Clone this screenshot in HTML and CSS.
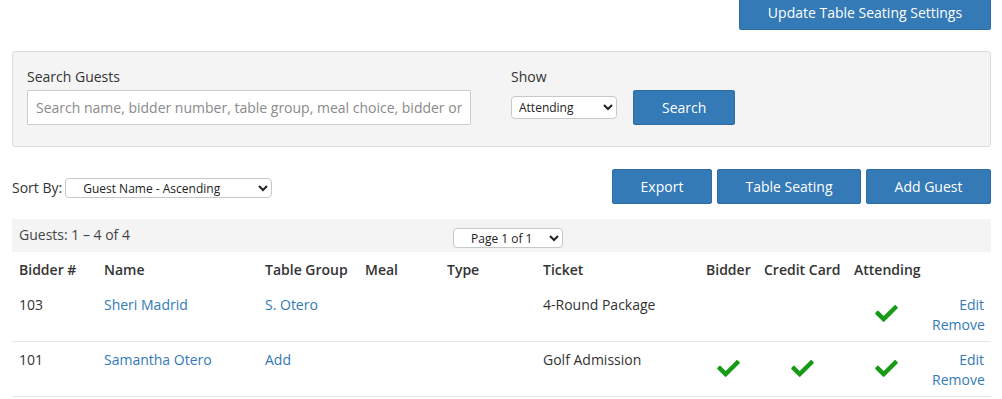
FILE: index.html
```html
<!DOCTYPE html>
<html lang="en">
<head>
  <meta charset="UTF-8">
  <title>Guests</title>
  <link rel="stylesheet" href="styles.css">
</head>
<body>
  <div class="page">
    <div class="top-bar">
      <button class="btn btn-update">Update Table Seating Settings</button>
    </div>

    <div class="search-panel">
      <div class="field">
        <label for="search">Search Guests</label>
        <input type="text" id="search" placeholder="Search name, bidder number, table group, meal choice, bidder or credit card">
      </div>
      <div class="field field-show">
        <label for="show">Show</label>
        <div class="show-row">
          <select id="show" class="select-show">
            <option>Attending</option>
          </select>
          <button class="btn">Search</button>
        </div>
      </div>
    </div>

    <div class="toolbar">
      <div class="sort">
        <label for="sort">Sort By:</label>
        <select id="sort" class="select-sort">
          <option>Guest Name - Ascending</option>
        </select>
      </div>
      <div class="actions">
        <button class="btn btn-export">Export</button>
        <button class="btn btn-seating">Table Seating</button>
        <button class="btn btn-add">Add Guest</button>
      </div>
    </div>

    <div class="summary">
      <span class="count">Guests: 1 &ndash; 4 of 4</span>
      <select class="select-page">
        <option>Page 1 of 1</option>
      </select>
    </div>

    <table class="guests">
      <colgroup>
        <col style="width: 85px">
        <col style="width: 161px">
        <col style="width: 100px">
        <col style="width: 82px">
        <col style="width: 96px">
        <col style="width: 163px">
        <col style="width: 58px">
        <col style="width: 90px">
        <col style="width: 78px">
        <col style="width: 66px">
      </colgroup>
      <thead>
        <tr>
          <th>Bidder #</th>
          <th>Name</th>
          <th>Table Group</th>
          <th>Meal</th>
          <th>Type</th>
          <th>Ticket</th>
          <th class="center">Bidder</th>
          <th class="center">Credit Card</th>
          <th class="center">Attending</th>
          <th></th>
        </tr>
      </thead>
      <tbody>
        <tr>
          <td>103</td>
          <td><a href="#">Sheri Madrid</a></td>
          <td><a href="#">S. Otero</a></td>
          <td></td>
          <td></td>
          <td>4-Round Package</td>
          <td class="check-cell"></td>
          <td class="check-cell"></td>
          <td class="check-cell"><svg class="check" viewBox="0 64 512 384"><path d="M173.9 439.4l-166.4-166.4c-10-10-10-26.2 0-36.2l36.2-36.2c10-10 26.2-10 36.2 0L192 312.7 432.1 72.6c10-10 26.2-10 36.2 0l36.2 36.2c10 10 10 26.2 0 36.2l-294.4 294.4c-10 10-26.2 10-36.2 0z"/></svg></td>
          <td class="links"><a href="#">Edit</a><a href="#">Remove</a></td>
        </tr>
        <tr>
          <td>101</td>
          <td><a href="#">Samantha Otero</a></td>
          <td><a href="#">Add</a></td>
          <td></td>
          <td></td>
          <td>Golf Admission</td>
          <td class="check-cell"><svg class="check" viewBox="0 64 512 384"><path d="M173.9 439.4l-166.4-166.4c-10-10-10-26.2 0-36.2l36.2-36.2c10-10 26.2-10 36.2 0L192 312.7 432.1 72.6c10-10 26.2-10 36.2 0l36.2 36.2c10 10 10 26.2 0 36.2l-294.4 294.4c-10 10-26.2 10-36.2 0z"/></svg></td>
          <td class="check-cell"><svg class="check" viewBox="0 64 512 384"><path d="M173.9 439.4l-166.4-166.4c-10-10-10-26.2 0-36.2l36.2-36.2c10-10 26.2-10 36.2 0L192 312.7 432.1 72.6c10-10 26.2-10 36.2 0l36.2 36.2c10 10 10 26.2 0 36.2l-294.4 294.4c-10 10-26.2 10-36.2 0z"/></svg></td>
          <td class="check-cell"><svg class="check" viewBox="0 64 512 384"><path d="M173.9 439.4l-166.4-166.4c-10-10-10-26.2 0-36.2l36.2-36.2c10-10 26.2-10 36.2 0L192 312.7 432.1 72.6c10-10 26.2-10 36.2 0l36.2 36.2c10 10 10 26.2 0 36.2l-294.4 294.4c-10 10-26.2 10-36.2 0z"/></svg></td>
          <td class="links"><a href="#">Edit</a><a href="#">Remove</a></td>
        </tr>
      </tbody>
    </table>
  </div>
</body>
</html>
```

FILE: styles.css
```css
body {
  margin: 0;
  font-family: "Open Sans", "Liberation Sans", sans-serif;
  font-size: 14px;
  line-height: 20px;
  color: #333;
  background-color: #fff;
  overflow: hidden;
}

.page {
  padding: 0 11px 0 12px;
}

a {
  color: #337ab7;
  text-decoration: none;
}

.btn {
  height: 35px;
  padding: 0 28px;
  font-family: inherit;
  font-size: 14px;
  color: #fff;
  background-color: #337ab7;
  border: 1px solid #2e6da4;
  border-radius: 2px;
  cursor: pointer;
}

.top-bar {
  display: flex;
  justify-content: flex-end;
}

.btn-update {
  margin-top: -5px;
  width: 252px;
  padding: 0;
}

.search-panel {
  display: flex;
  gap: 40px;
  margin-top: 21px;
  padding: 15px 14px 21px;
  background-color: #f4f4f4;
  border: 1px solid #dcdcdc;
  border-radius: 3px;
}

.field {
  display: flex;
  flex-direction: column;
  gap: 3px;
}

.field input {
  box-sizing: border-box;
  width: 444px;
  height: 35px;
  padding: 0 8px;
  font-family: inherit;
  font-size: 14px;
  color: #333;
  background-color: #fff;
  border: 1px solid #ccc;
  border-radius: 1px;
}

.field input::placeholder {
  color: #8a8a8a;
}

.show-row {
  display: flex;
  align-items: center;
  gap: 16px;
}

select {
  box-sizing: border-box;
  font-family: inherit;
  font-size: 12px;
  color: #222;
  background-color: #fff;
  border: 1px solid #c8c8c8;
  border-radius: 4px;
}

.select-show {
  width: 106px;
  height: 23px;
  padding-left: 3px;
}

.toolbar {
  display: flex;
  justify-content: space-between;
  align-items: center;
  margin-top: 22px;
}

.sort {
  display: flex;
  align-items: center;
  gap: 3px;
  padding-top: 3px;
}

.select-sort {
  width: 207px;
  height: 20px;
  padding-left: 13px;
}

.actions {
  display: flex;
  gap: 5px;
}

.actions .btn {
  padding: 0;
}

.btn-export {
  width: 100px;
}

.btn-seating {
  width: 144px;
}

.btn-add {
  width: 125px;
}

.summary {
  display: flex;
  align-items: center;
  height: 33px;
  margin-top: 15px;
  padding-left: 7px;
  background-color: #f4f4f4;
  color: #444;
}

.count {
  width: 434px;
  padding-bottom: 1px;
}

.select-page {
  width: 110px;
  height: 20px;
  padding-left: 13px;
  margin-top: 4px;
}

.guests {
  width: 979px;
  table-layout: fixed;
  border-collapse: collapse;
}

.guests th {
  padding: 8px 7px 7px;
  font-weight: 600;
  text-align: left;
  white-space: nowrap;
  color: #333;
}

.guests th.center {
  text-align: center;
}

.guests td {
  padding: 8px 7px 6px;
  vertical-align: top;
  border-bottom: 1px solid #e6e6e6;
}

.guests td.check-cell {
  text-align: center;
  padding-top: 18px;
}

.check {
  display: block;
  width: 23px;
  height: 17px;
  margin: 0 auto;
  fill: #179b17;
}

.links {
  text-align: right;
}

.links a {
  display: block;
}
```
